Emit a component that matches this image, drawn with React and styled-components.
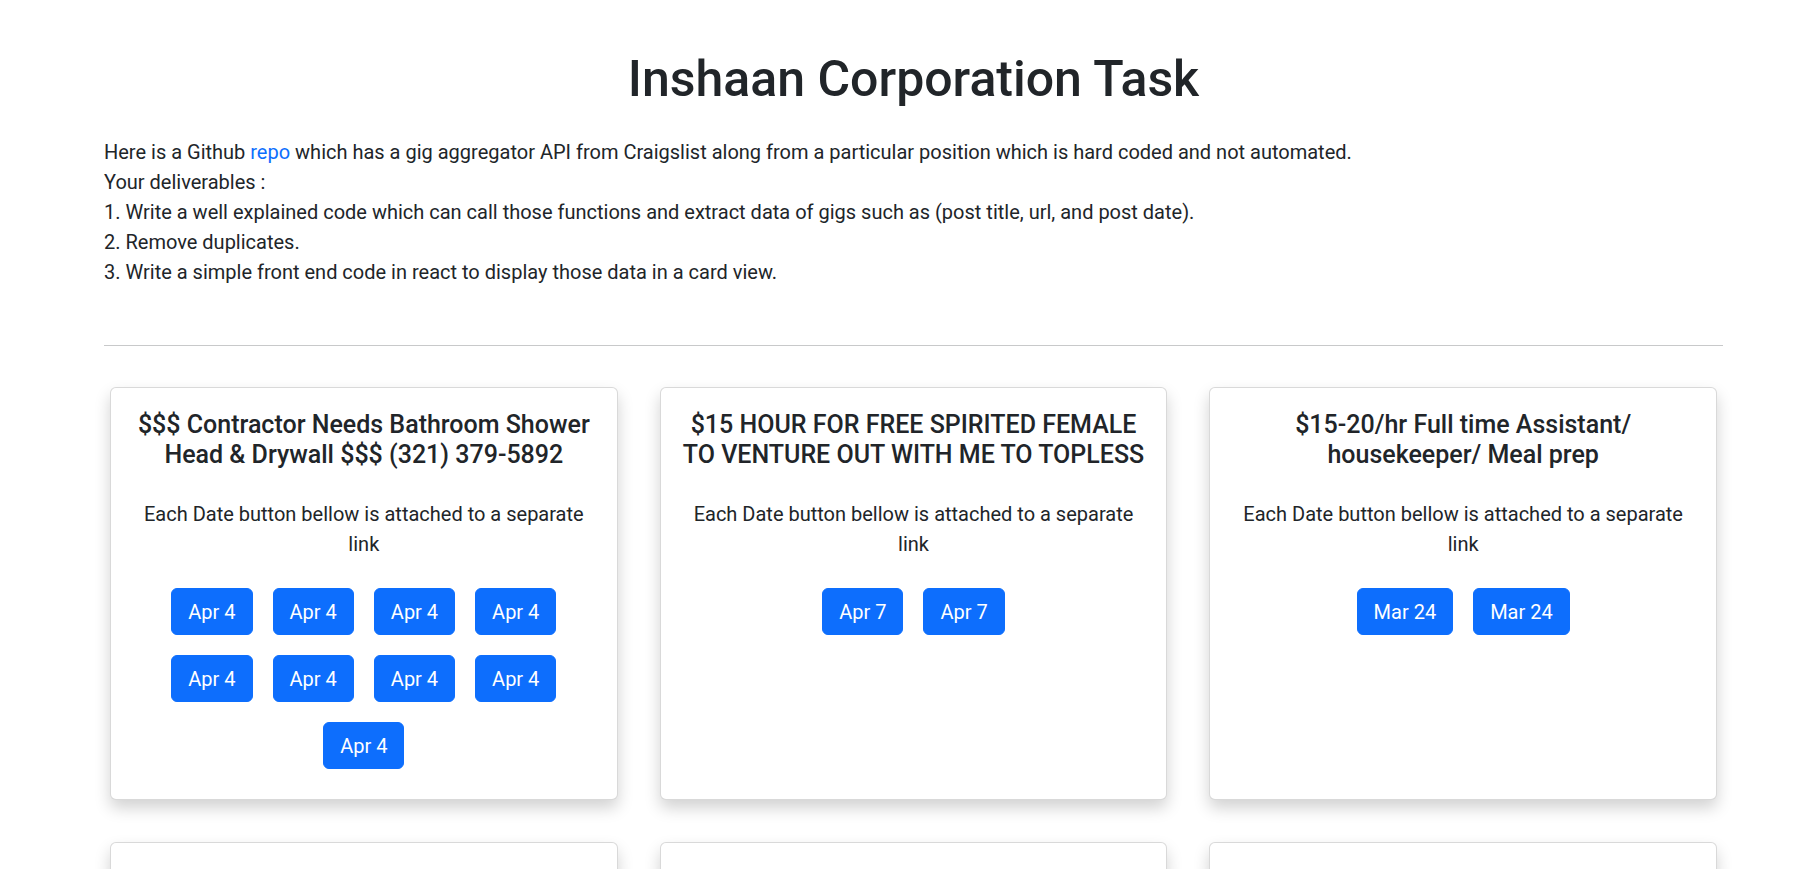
import React from "react";
import styled, { createGlobalStyle } from "styled-components";

const GlobalStyle = createGlobalStyle`
  *, *::before, *::after { box-sizing: border-box; }
  body {
    margin: 0;
    background: #fff;
    color: #212529;
    font-family: Roboto, "Liberation Sans", Arial, sans-serif;
    font-size: 20px;
    line-height: 30px;
  }
`;

const Page = styled.main`
  padding: 49px 93px 40px 104px;
`;

const Title = styled.h1`
  margin: 0;
  text-align: center;
  font-size: 50px;
  line-height: 60px;
  font-weight: 500;
`;

const Intro = styled.p`
  margin: 28px 0 0;
  font-size: 20px;
  line-height: 30px;
`;

const Link = styled.a`
  color: #0d6efd;
  text-decoration: none;
`;

const Divider = styled.hr`
  margin: 58px 0 41px;
  border: 0;
  border-top: 1px solid #c8c9ca;
  height: 0;
`;

const Grid = styled.section`
  display: grid;
  grid-template-columns: repeat(3, 1fr);
  gap: 42px;
  padding: 0 6px;
`;

const Card = styled.article`
  background: #fff;
  border: 1px solid rgba(0, 0, 0, 0.15);
  border-radius: 6px;
  box-shadow: 0 8px 16px rgba(0, 0, 0, 0.18);
  padding: 22px 20px 20px;
  text-align: center;
`;

const CardTitle = styled.h5`
  margin: 0 0 29px;
  font-size: 25px;
  line-height: 30px;
  font-weight: 500;
`;

const CardText = styled.p`
  margin: 0 0 19px;
  font-size: 20px;
  line-height: 30px;
`;

const Dates = styled.div`
  display: flex;
  flex-wrap: wrap;
  justify-content: center;
`;

const DateButton = styled.a`
  display: inline-block;
  margin: 10px;
  padding: 7.5px 16px;
  font-size: 20px;
  line-height: 30px;
  color: #fff;
  background: #0d6efd;
  border: 1px solid #0d6efd;
  border-radius: 6px;
  text-decoration: none;
  cursor: pointer;
`;

const gigs = [
  {
    title: "$$$ Contractor Needs Bathroom Shower Head & Drywall $$$ (321) 379-5892",
    dates: Array(9).fill("Apr 4"),
  },
  {
    title: "$15 HOUR FOR FREE SPIRITED FEMALE TO VENTURE OUT WITH ME TO TOPLESS",
    dates: ["Apr 7", "Apr 7"],
  },
  {
    title: "$15-20/hr Full time Assistant/ housekeeper/ Meal prep",
    dates: ["Mar 24", "Mar 24"],
  },
  { title: "MOVERS NEEDED ASAP", dates: ["Apr 2"] },
  { title: "PAINTER WANTED FOR SMALL JOB", dates: ["Apr 5", "Apr 5"] },
  { title: "ERRAND RUNNER NEEDED", dates: ["Mar 30"] },
];

export default function App() {
  return (
    <>
      <GlobalStyle />
      <Page>
        <Title>Inshaan Corporation Task</Title>
        <Intro>
          Here is a Github <Link href="#">repo</Link> which has a gig aggregator API from
          Craigslist along from a particular position which is hard coded and not automated.
          <br />
          Your deliverables :
          <br />
          1. Write a well explained code which can call those functions and extract data of gigs
          such as (post title, url, and post date).
          <br />
          2. Remove duplicates.
          <br />
          3. Write a simple front end code in react to display those data in a card view.
        </Intro>
        <Divider />
        <Grid>
          {gigs.map((g, i) => (
            <Card key={i}>
              <CardTitle>{g.title}</CardTitle>
              <CardText>Each Date button bellow is attached to a separate link</CardText>
              <Dates>
                {g.dates.map((d, j) => (
                  <DateButton key={j} href="#">
                    {d}
                  </DateButton>
                ))}
              </Dates>
            </Card>
          ))}
        </Grid>
      </Page>
    </>
  );
}
